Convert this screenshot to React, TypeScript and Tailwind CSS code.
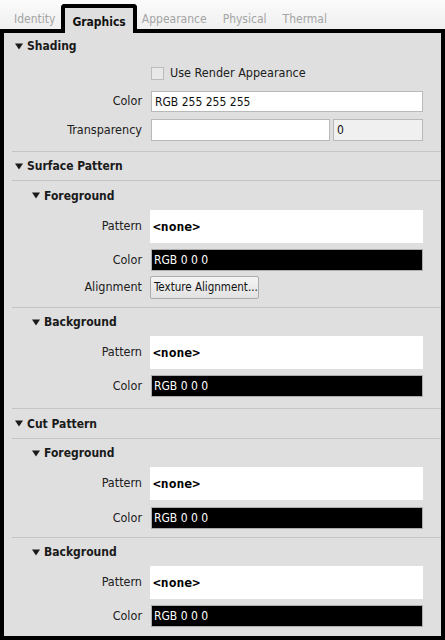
import React from "react";

const font = { fontFamily: '"DejaVu Sans Condensed", "DejaVu Sans", sans-serif', fontStretch: "semi-condensed" as const };

function Tri() {
  return (
    <svg width="8" height="7" viewBox="0 0 8 7" className="shrink-0">
      <polygon points="0,0.5 8,0.5 4,6.5" fill="#1a1a1a" />
    </svg>
  );
}

function Header({ title, sub, h }: { title: string; sub?: boolean; h: string }) {
  return (
    <div className={`flex items-center gap-[4px] ${h} ${sub ? "pl-[28px]" : "pl-[11px]"}`}>
      <Tri />
      <span className="text-[12px] font-bold text-[#1a1a1a]">{title}</span>
    </div>
  );
}

function Sep() {
  return <div className="ml-[8px] h-px bg-[#c4c4c4]" />;
}

function Label({ children }: { children: React.ReactNode }) {
  return <div className="w-[138px] shrink-0 text-right text-[12.5px] text-[#202020]">{children}</div>;
}

function PatternRow() {
  return (
    <div className="flex h-[33px] items-center">
      <Label>Pattern</Label>
      <div className="ml-[8px] flex h-[33px] w-[273px] items-center bg-white pl-[3px]">
        <span className="text-[13px] font-bold text-black" style={{ fontFamily: '"DejaVu Sans Mono", monospace' }}>
          &lt;none&gt;
        </span>
      </div>
    </div>
  );
}

function BlackColorRow({ mt }: { mt: string }) {
  return (
    <div className={`flex h-[22px] items-center ${mt}`}>
      <Label>Color</Label>
      <div className="ml-[9px] flex h-[22px] w-[272px] items-center border border-[#adadad] bg-black pl-[2px]">
        <span className="text-[12px] text-white">RGB 0 0 0</span>
      </div>
    </div>
  );
}

export default function App() {
  return (
    <div className="flex h-[640px] w-[445px] flex-col bg-[#f0f0f0]" style={font}>
      {/* Tab strip */}
      <div className="flex h-[29px] items-end bg-gradient-to-b from-[#fbfbfb] to-[#efefef] pl-[4px]">
        <div className="flex h-[25px] items-center pl-[10px] pr-[6px] pt-[5px] text-[12px] text-[#a4a4a4]">Identity</div>
        <div className="relative z-10 -mb-[4px] flex h-[29px] items-center rounded-t-[4px] border-4 border-b-0 border-black bg-[#dfdfdf] px-[7px] pt-[2px] text-[12px] font-bold text-[#111]">
          Graphics
        </div>
        <div className="flex h-[25px] items-center pl-[5px] pt-[5px] text-[12px] text-[#a4a4a4]">Appearance</div>
        <div className="flex h-[25px] items-center pl-[16px] pt-[5px] text-[12px] text-[#a4a4a4]">Physical</div>
        <div className="flex h-[25px] items-center pl-[16px] pt-[5px] text-[12px] text-[#a4a4a4]">Thermal</div>
      </div>

      {/* Panel */}
      <div className="flex flex-1 flex-col border-4 border-black bg-[#dfdfdf]">
        <Header title="Shading" h="h-[26px]" />
        <div className="flex h-[28px] items-center pl-[147px]">
          <div className="h-[13px] w-[13px] border border-[#bcbcbc] bg-[#e8e8e8]" />
          <span className="ml-[6px] text-[12.5px] text-[#202020]">Use Render Appearance</span>
        </div>
        <div className="mt-[4px] flex h-[21px] items-center">
          <Label>Color</Label>
          <div className="ml-[9px] flex h-[21px] w-[272px] items-center border border-[#b9b9b9] bg-white pl-[3px]">
            <span className="text-[12px] text-[#111]">RGB 255 255 255</span>
          </div>
        </div>
        <div className="mt-[7px] flex h-[22px] items-center">
          <Label>Transparency</Label>
          <div className="ml-[9px] h-[22px] w-[179px] border border-[#b9b9b9] bg-white" />
          <div className="ml-[3px] flex h-[22px] w-[90px] items-center border border-[#b9b9b9] bg-[#f0f0f0] pl-[3px]">
            <span className="text-[12px] text-[#111]">0</span>
          </div>
        </div>
        <div className="mt-[10px]">
          <Sep />
        </div>

        <Header title="Surface Pattern" h="h-[28px]" />
        <Sep />
        <Header title="Foreground" sub h="h-[29px]" />
        <PatternRow />
        <BlackColorRow mt="mt-[6px]" />
        <div className="mt-[5px] flex h-[23px] items-center">
          <Label>Alignment</Label>
          <div className="ml-[8px] flex h-[23px] w-[109px] items-center rounded-[2px] border border-[#acacac] bg-gradient-to-b from-[#f4f4f4] to-[#e2e2e2] px-[3px]">
            <span className="whitespace-nowrap text-[11.5px] text-[#111]">Texture Alignment...</span>
          </div>
        </div>
        <div className="mt-[8px]">
          <Sep />
        </div>
        <Header title="Background" sub h="h-[28px]" />
        <PatternRow />
        <BlackColorRow mt="mt-[6px]" />
        <div className="mt-[11px]">
          <Sep />
        </div>

        <Header title="Cut Pattern" h="h-[29px]" />
        <Sep />
        <Header title="Foreground" sub h="h-[28px]" />
        <PatternRow />
        <BlackColorRow mt="mt-[7px]" />
        <div className="mt-[8px]">
          <Sep />
        </div>
        <Header title="Background" sub h="h-[28px]" />
        <PatternRow />
        <BlackColorRow mt="mt-[6px]" />
      </div>
    </div>
  );
}
